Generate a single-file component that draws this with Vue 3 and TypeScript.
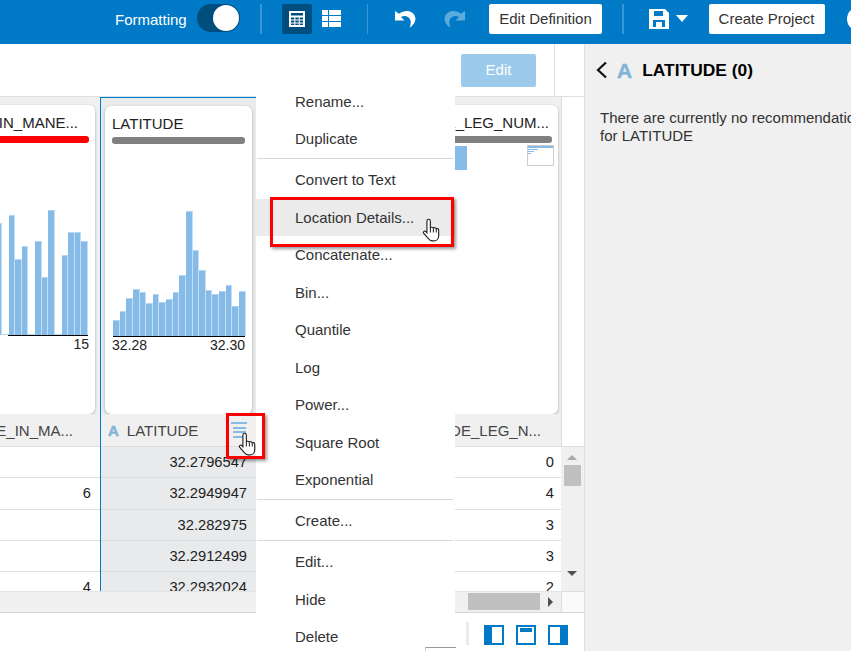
<script setup lang="ts">
const latBars: number[] = [16, 25, 38, 47, 44, 33, 42, 34, 37, 44, 61, 125, 86, 66, 46, 42, 45, 51, 30, 45]
const maneBars: number[] = [112, 0, 120, 76, 89, 0, 94, 58, 125, 0, 80, 103, 103, 94]
type MenuEntry = { label?: string; hover?: boolean; sep?: boolean }
const menu: MenuEntry[] = [
  { label: 'Rename...' }, { label: 'Duplicate' }, { sep: true },
  { label: 'Convert to Text' }, { label: 'Location Details...', hover: true }, { label: 'Concatenate...' },
  { label: 'Bin...' }, { label: 'Quantile' }, { label: 'Log' }, { label: 'Power...' },
  { label: 'Square Root' }, { label: 'Exponential' }, { sep: true },
  { label: 'Create...' }, { sep: true },
  { label: 'Edit...' }, { label: 'Hide' }, { label: 'Delete' },
]
const colA: string[] = ['', '6', '', '', '4']
const colB: string[] = ['32.2796547', '32.2949947', '32.282975', '32.2912499', '32.2932024']
const colC: string[] = ['0', '4', '3', '3', '2']
const handPath = 'M6.2 1.2c1 0 1.7.8 1.7 1.8v6.6c.2-1 2.7-1 2.9.3.3-.9 2.6-.8 2.8.6.5-.7 2.3-.4 2.3 1v5.2c0 3.1-1.9 5.3-4.6 5.3H9.6c-1.6 0-2.6-.8-3.6-2.3L1.4 14.600c-.9-1.500.9-2.700 2.200-1.500l1 1.100V3c0-1 .7-1.800 1.600-1.800z'
</script>

<template>
  <div class="page">
    <header class="topbar">
      <span class="fmt">Formatting</span>
      <span class="toggle"><span class="knob"></span></span>
      <span class="vsep s1"></span>
      <span class="view-on">
        <svg width="18" height="18" viewBox="0 0 18 18"><path fill="#fff" fill-rule="evenodd" d="M1 1h16v16H1z M3 3v2.500h12V3z M3 7.500v2h3.300v-2z M7.300 7.500v2h3.400v-2z M11.700 7.500v2H15v-2z M3 10.500v2h3.300v-2z M7.300 10.500v2h3.400v-2z M11.700 10.500v2H15v-2z M3 13.500V15h3.300v-1.500z M7.300 13.500V15h3.400v-1.500z M11.700 13.500V15H15v-1.500z"/></svg>
      </span>
      <svg class="view-list" width="19" height="19" viewBox="0 0 19 19"><path fill="#fff" d="M0 1h6v5H0zM7 1h12v5H7zM0 7h6v5H0zM7 7h12v5H7zM0 13h6v5H0zM7 13h12v5H7z"/></svg>
      <span class="vsep s2"></span>
      <svg class="undo" width="21" height="18" viewBox="0 0 21 18"><path fill="#fff" d="M0 1v9.500h9.500L6 7c3.500-2.200 8.500-.6 9.500 3.500.5 2.200.2 4.500-1 7.200C18.500 15.500 21 11.500 20.300 7.500 19 1.300 11 -1.200 4 3.700z"/></svg>
      <svg class="redo" width="21" height="18" viewBox="0 0 21 18"><path fill="#5cabdf" d="M21 1v9.500h-9.500L15 7c-3.500-2.200-8.500-.6-9.500 3.500-.5 2.200-.2 4.500 1 7.200C2.500 15.500 0 11.500.7 7.500 2 1.300 10 -1.200 17 3.700z"/></svg>
      <span class="tb-btn def">Edit Definition</span>
      <span class="vsep s3"></span>
      <svg class="save" width="20" height="20" viewBox="0 0 20 20"><path fill="#fff" fill-rule="evenodd" d="M0 0h16l4 4v16H0z M5 2v5h9V2z M4 11v7h12v-7z"/><path fill="#fff" d="M7 13h6v5H7z"/></svg>
      <span class="caret"></span>
      <span class="tb-btn create">Create Project</span>
      <span class="avatar"></span>
    </header>

    <div class="body">
      <main class="main">
        <div class="toolbar">
          <span class="edit">Edit</span>
          <span class="tool-line"></span>
        </div>

        <div class="grid">
          <section class="col col-a">
            <div class="card-zone">
              <div class="card card-a">
                <div class="title end">TIME_IN_MANE...</div>
                <div class="bar-q red"></div>
                <div class="chart chart-a">
                  <span v-for="(h, i) in maneBars" :key="i" class="b" :style="{ height: h + 'px' }"></span>
                </div>
                <div class="labels end-l"><span>15</span></div>
              </div>
            </div>
            <div class="head head-a"><span>TIME_IN_MA...</span></div>
            <div v-for="(v, i) in colA" :key="i" class="row">{{ v }}</div>
          </section>

          <section class="col col-b">
            <div class="card-zone">
              <div class="card card-b">
                <div class="title">LATITUDE</div>
                <div class="bar-q gray"></div>
                <div class="chart chart-b">
                  <span v-for="(h, i) in latBars" :key="i" class="b" :style="{ height: h + 'px' }"></span>
                </div>
                <div class="labels"><span>32.28</span><span>32.30</span></div>
              </div>
            </div>
            <div class="head head-b">
              <span class="a-icon small">A</span>
              <span class="head-label">LATITUDE</span>
              <span class="lines"><i></i><i></i><i></i><i></i></span>
            </div>
            <div v-for="(v, i) in colB" :key="i" class="row">{{ v }}</div>
          </section>

          <section class="col col-c">
            <div class="card-zone">
              <div class="card card-c">
                <div class="title end">TOTAL_LEG_NUM...</div>
                <div class="bar-q gray"></div>
                <div class="c-extra">
                  <span class="c-bar"></span>
                  <span class="mini"><i class="m1"></i><i class="m2"></i><i class="m3"></i><i class="m4"></i></span>
                </div>
              </div>
            </div>
            <div class="head head-c"><span>WIDE_LEG_N...</span></div>
            <div v-for="(v, i) in colC" :key="i" class="row">{{ v }}</div>
          </section>

          <section class="vscroll">
            <div class="v-top"></div>
            <div class="v-track">
              <span class="tri-up"></span>
              <span class="v-thumb"></span>
              <span class="tri-down"></span>
            </div>
          </section>
        </div>

        <div class="hscroll">
          <div class="h-track">
            <span class="h-thumb"></span>
            <span class="tri-right"></span>
          </div>
          <div class="h-corner"></div>
        </div>

        <footer class="bottom">
          <span class="b-sep"></span>
          <svg width="20" height="20" viewBox="0 0 20 20"><path fill="#0079c7" d="M0 0h20v20H0z"/><path fill="#fff" d="M8 2h10v16H8z"/></svg>
          <svg width="20" height="20" viewBox="0 0 20 20"><path fill="#0079c7" d="M0 0h20v20H0z"/><path fill="#fff" d="M2 2h16v16H2z"/><path fill="#0079c7" d="M4 3h12v4H4z"/></svg>
          <svg width="20" height="20" viewBox="0 0 20 20"><path fill="#0079c7" d="M0 0h20v20H0z"/><path fill="#fff" d="M2 2h10v16H2z"/></svg>
        </footer>
      </main>

      <aside class="side">
        <div class="side-head">
          <svg width="13" height="18" viewBox="0 0 13 18"><path d="M11 1.500 3 9l8 7.500" fill="none" stroke="#111" stroke-width="2.200"/></svg>
          <span class="a-icon big">A</span>
          <span class="side-title">LATITUDE (0)</span>
        </div>
        <p class="side-text">There are currently no recommendations<br>for LATITUDE</p>
      </aside>
    </div>

    <nav class="menu">
      <template v-for="(m, i) in menu" :key="i">
        <div v-if="m.sep" class="msep"></div>
        <div v-else class="mitem" :class="{ hover: m.hover }">{{ m.label }}</div>
      </template>
    </nav>
    <span class="menu-tail"></span>

    <span class="red-box red-loc"></span>
    <span class="red-box red-ico"></span>
    <svg class="hand hand-loc" width="19" height="25" viewBox="0 0 18 24"><path :d="handPath" fill="#fff" stroke="#222" stroke-width="1.100"/><path d="M7.900 9.500v4.500M10.800 10v4M13.600 10.800v3.200" stroke="#222" fill="none"/></svg>
    <svg class="hand hand-ico" width="19" height="25" viewBox="0 0 18 24"><path :d="handPath" fill="#fff" stroke="#222" stroke-width="1.100"/><path d="M7.900 9.500v4.500M10.800 10v4M13.600 10.800v3.200" stroke="#222" fill="none"/></svg>
  </div>
</template>

<style>
html, body { margin: 0; padding: 0; background: #fff; overflow: hidden; }
</style>

<style scoped>
.page {
  position: relative;
  width: 851px;
  height: 651px;
  overflow: hidden;
  font-family: "Liberation Sans", Arial, sans-serif;
  font-size: 15px;
  color: #222;
  display: flex;
  flex-direction: column;
}
.topbar {
  height: 44px;
  flex: none;
  background: #0079c7;
  display: flex;
  align-items: flex-start;
  position: relative;
}
.fmt { color: #fff; margin: 12px 0 0 115px; line-height: 16px; width: 82px; flex: none; }
.toggle { width: 43px; height: 28px; margin-top: 4px; border-radius: 14px; background: #004e7e; position: relative; flex: none; }
.knob { position: absolute; right: 1px; top: 1px; width: 26px; height: 26px; border-radius: 50%; background: #fff; }
.vsep { width: 1.500px; height: 30px; margin-top: 4px; background: #3b96d4; flex: none; }
.s1 { margin-left: 20px; }
.view-on { margin: 4px 0 0 20px; width: 30px; height: 30px; background: #004e7e; border-radius: 2px; display: flex; align-items: center; justify-content: center; flex: none; }
.view-list { margin: 9px 0 0 10px; flex: none; }
.s2 { margin-left: 26px; }
.undo { margin: 10px 0 0 27px; flex: none; }
.redo { margin: 10px 0 0 28px; flex: none; }
.tb-btn { height: 30px; margin-top: 4px; background: #fff; border-radius: 2px; line-height: 30px; text-align: center; color: #333; flex: none; }
.def { width: 113px; margin-left: 24px; }
.s3 { margin-left: 20px; }
.save { margin: 9px 0 0 25px; flex: none; }
.caret { margin: 15px 0 0 7px; border-left: 6px solid transparent; border-right: 6px solid transparent; border-top: 7px solid #fff; flex: none; }
.create { width: 116px; margin-left: 21px; }
.avatar { margin: 7px 0 0 22px; width: 24px; height: 24px; background: #fff; border-radius: 50%; flex: none; }

.body { flex: 1; display: flex; min-height: 0; }
.main { width: 584px; flex: none; display: flex; flex-direction: column; border-right: 1px solid #d8e0e8; }
.toolbar { height: 52px; flex: none; border-bottom: 1px solid #d8e0e8; display: flex; justify-content: flex-end; }
.edit { width: 75px; height: 33px; margin: 10px 18px 0 0; background: #9bcaea; color: #fff; border-radius: 2px; text-align: center; line-height: 32px; }
.tool-line { width: 1px; height: 52px; margin-right: 29px; background: #d8e0e8; }

.grid { height: 494px; flex: none; display: flex; overflow: hidden; }
.col { flex: none; overflow: hidden; background: #f0f0f0; }
.col-a { width: 100px; }
.col-b { width: 156px; box-sizing: border-box; border-left: 1px solid #0079c7; background: #e9eaec; }
.col-c { width: 305px; }
.card-zone { height: 317px; box-sizing: border-box; padding-top: 8px; }
.col-b .card-zone { border-top: 1px solid #0079c7; }
.card {
  height: 309px;
  box-sizing: border-box;
  background: #fff;
  border-radius: 6px;
  box-shadow: 0 1px 3px rgba(0, 0, 0, .3);
  padding: 8px 7px 0;
  overflow: hidden;
}
.card-a { margin-left: -10px; margin-right: 5px; padding-right: 6px; }
.card-b { margin: 0 4px; height: 308px; }
.card-c { margin-right: 3px; padding-right: 6px; }
.title { height: 20px; line-height: 20px; white-space: nowrap; overflow: hidden; color: #222; }
.title.end { display: flex; justify-content: flex-end; }
.card-a .title { padding-right: 11px; }
.card-c .title { padding-right: 3px; }
.bar-q { height: 6.500px; margin-top: 3px; border-radius: 3px; }
.red { background: #f00; }
.gray { background: #808080; }
.chart { height: 192px; margin-top: 0; border-bottom: 1px solid #000; display: flex; align-items: flex-end; }
.chart-a { margin-right: 1px; margin-left: 11px; justify-content: flex-end; }
.chart-b { margin-left: 1px; }
.b { width: 6.630px; box-sizing: border-box; flex: none; background: #86bbe8; border-right: 1px solid #c4def5; border-top: 1px solid #b4d5f2; }
.labels { display: flex; justify-content: space-between; height: 16px; line-height: 16px; font-size: 14px; color: #222; }
.labels.end-l { justify-content: flex-end; }
.c-extra { display: flex; align-items: flex-start; margin-top: 3px; }
.c-bar { width: 12px; height: 24px; margin-left: 192px; background: #86bbe8; flex: none; }
.mini { margin-left: auto; margin-right: -2px; margin-top: -1px; width: 27px; height: 21px; box-sizing: border-box; border: 1px solid #ccc; background: #fff; display: block; flex: none; }
.mini i { display: block; background: #86bbe8; height: 1px; margin-bottom: 1px; }
.m1 { width: 25px; height: 2px !important; }
.m2 { width: 10px; }
.m3 { width: 6px; }
.m4 { width: 3px; }

.head { height: 33px; box-sizing: border-box; border-bottom: 1px solid #ddd; background: #f0f0f0; line-height: 33px; color: #444; white-space: nowrap; overflow: hidden; display: flex; align-items: center; }
.head-a { justify-content: flex-end; padding-right: 27px; }
.head-c { justify-content: flex-end; padding-right: 20px; }
.head-b { padding-left: 7px; position: relative; }
.head-label { margin-left: 8px; }
.a-icon { font-weight: 700; color: #85b3d6; font-family: "Liberation Sans", Arial, sans-serif; line-height: 1; -webkit-text-stroke: .5px #85b3d6; }
.a-icon.small { font-size: 15px; }
.a-icon.big { font-size: 21px; }
.lines { margin-left: auto; margin-right: 9px; width: 16px; }
.lines i { display: block; height: 2px; margin: 2px 0 2.500px auto; background: #86bbe8; }
.lines i:nth-child(n + 2) { width: 13px; margin-right: 1px; }

.row { height: 31.250px; box-sizing: border-box; border-bottom: 1px solid #ddd; background: #fff; text-align: right; padding-right: 9px; line-height: 30px; color: #222; font-size: 14.700px; }
.col-b .row { background: #e9eaec; }
.col-c .row { padding-right: 7px; }

.vscroll { width: 23px; flex: none; display: flex; flex-direction: column; }
.v-top { height: 350px; flex: none; box-sizing: border-box; border-left: 1px solid #ddd; border-bottom: 1px solid #ddd; background: #fff; }
.v-track { flex: 1; background: #f0f0f0; position: relative; display: flex; flex-direction: column; align-items: center; padding-right: 1px; }
.v-thumb { width: 17px; height: 21px; background: #c0c0c0; margin-top: 5px; }
.tri-up { margin-top: 8px; border-left: 5px solid transparent; border-right: 5px solid transparent; border-bottom: 5px solid #aaa; }
.tri-down { margin-top: 85px; border-left: 5px solid transparent; border-right: 5px solid transparent; border-top: 5px solid #505050; }

.hscroll { height: 22px; flex: none; display: flex; box-sizing: border-box; border-bottom: 1px solid #d8d8d8; }
.h-track { flex: 1; background: #f0f0f0; display: flex; align-items: flex-start; border-top: 1px solid #e4e4e4; }
.h-thumb { width: 72px; height: 17px; margin: 1px 0 0 468px; background: #c0c0c0; }
.tri-right { margin: 5px 0 0 8px; border-top: 5px solid transparent; border-bottom: 5px solid transparent; border-left: 5px solid #505050; }
.h-corner { width: 23px; background: #fafafa; box-sizing: border-box; border-left: 1px solid #ddd; border-top: 1px solid #ddd; }

.bottom { flex: 1; display: flex; justify-content: flex-end; align-items: flex-start; gap: 12px; padding: 12px 16px 0 0; }
.b-sep { width: 3px; height: 23px; margin: -3px 3px 0 0; background: #e8ecf0; }

.side { flex: 1; background: #f0f0f0; min-width: 0; }
.side-head { display: flex; align-items: center; height: 52px; padding-left: 10px; white-space: nowrap; }
.side-head .a-icon { margin-left: 9px; }
.side-title { font-weight: 700; font-size: 17.400px; color: #000; margin-left: 10px; }
.side-text { margin: 13px 0 0 15px; line-height: 18px; color: #333; white-space: nowrap; }

.menu {
  position: absolute;
  left: 256px;
  top: 90px;
  width: 199px;
  height: 561px;
  overflow: hidden;
  background: #fff;
  box-sizing: border-box;
}
.mitem { height: 37.500px; line-height: 37px; padding-left: 39px; color: #333; }
.mitem:first-child { margin-top: -7.250px; }
.mitem.hover { background: #ebebeb; }
.msep { height: 1px; margin: .250px 2px 2.250px 1px; background: #d8d8d8; }
.menu-tail { position: absolute; left: 425px; top: 647px; width: 30px; height: 4px; border-top: 1px solid #999; border-left: 1px solid #ccc; background: #fff; }

.red-box { position: absolute; box-sizing: border-box; border: 3px solid #f00; background: transparent; box-shadow: 2px 2px 3px rgba(0, 0, 0, .4); }
.red-loc { left: 270px; top: 197px; width: 184px; height: 50px; }
.red-ico { left: 226px; top: 413px; width: 39px; height: 46px; }
.hand { position: absolute; }
.hand-loc { left: 422px; top: 218px; }
.hand-ico { left: 238px; top: 432px; }
</style>
